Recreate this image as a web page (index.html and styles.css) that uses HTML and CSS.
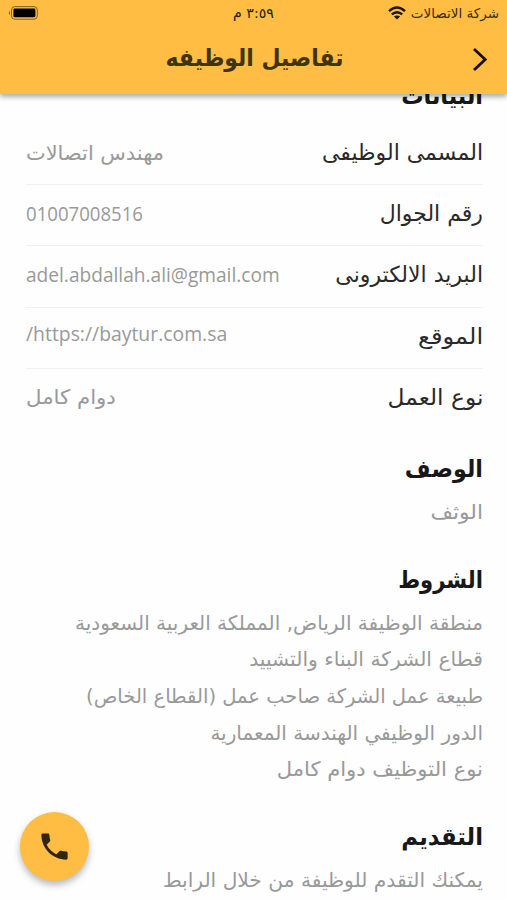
FILE: index.html
```html
<!DOCTYPE html>
<html lang="ar" dir="rtl">
<head>
<meta charset="utf-8">
<title>تفاصيل الوظيفه</title>
<link rel="stylesheet" href="styles.css">
</head>
<body>
<div class="screen">
  <header class="top">
    <div class="status">
      <div class="carrier"><span class="carrier-name">شركة الاتصالات</span>
        <svg class="wifi" width="18" height="14" viewBox="0 0 18 14"><path d="M1 5.2Q9-2 17 5.2M3.8 8.4Q9 4 14.2 8.4" fill="none" stroke="#1b1405" stroke-width="2.4"/><path d="M5.9 10.6Q9 8.2 12.1 10.6L9 13.6Z" fill="#1b1405"/></svg>
      </div>
      <span class="time">٣:٥٩ م</span>
      <svg class="battery" width="30" height="14" viewBox="0 0 30 14"><rect x="3.5" y=".6" width="25.8" height="12.6" rx="3.3" fill="none" stroke="#806022"/><rect x="5.4" y="2.5" width="22" height="8.8" rx="1.4" fill="#000"/><path d="M2 4.8Q-.2 7 2 9.2Z" fill="#806022"/></svg>
    </div>
    <div class="bar">
      <svg class="back" width="16" height="25" viewBox="0 0 16 25"><path d="M2 2 13.2 12.5 2 23" fill="none" stroke="#171205" stroke-width="2.8"/></svg>
      <h1>تفاصيل الوظيفه</h1>
    </div>
  </header>
  <main>
    <h2 class="first">البيانات</h2>
    <dl>
      <div class="row"><dt>المسمى الوظيفى</dt><dd class="v1">مهندس اتصالات</dd></div>
      <div class="row"><dt>رقم الجوال</dt><dd class="latin v2">01007008516</dd></div>
      <div class="row"><dt>البريد الالكترونى</dt><dd class="latin v3">adel.abdallah.ali@gmail.com</dd></div>
      <div class="row"><dt class="l4">الموقع</dt><dd class="latin v4">https://baytur.com.sa/</dd></div>
      <div class="row"><dt class="l5">نوع العمل</dt><dd class="v5">دوام كامل</dd></div>
    </dl>
    <section class="desc"><h2>الوصف</h2><p>الوثف</p></section>
    <section class="terms"><h2>الشروط</h2>
      <p class="p1">منطقة الوظيفة الرياض, المملكة العربية السعودية</p>
      <p class="p2">قطاع الشركة البناء والتشييد</p>
      <p class="p3">طبيعة عمل الشركة صاحب عمل (القطاع الخاص)</p>
      <p class="p4">الدور الوظيفي الهندسة المعمارية</p>
      <p class="p5">نوع التوظيف دوام كامل</p>
    </section>
    <section class="apply"><h2>التقديم</h2><p>يمكنك التقدم للوظيفة من خلال الرابط</p></section>
  </main>
  <button class="call" aria-label="اتصال"><svg width="35" height="35" viewBox="0 0 24 24"><path fill="#30270d" d="M6.62 10.79c1.44 2.83 3.76 5.14 6.59 6.59l2.2-2.2c.27-.27.67-.36 1.02-.24 1.12.37 2.33.57 3.57.57.55 0 1 .45 1 1V20c0 .55-.45 1-1 1-9.39 0-17-7.61-17-17 0-.55.45-1 1-1h3.5c.55 0 1 .45 1 1 0 1.25.2 2.45.57 3.57.11.35.03.74-.25 1.02l-2.2 2.2z"/></svg></button>
</div>
</body>
</html>
```
FILE: styles.css
```css
* { box-sizing: border-box; }
body { margin: 0; background: #fefefe; color: #222; font-family: "DejaVu Sans", sans-serif; }
.screen { position: relative; height: 900px; overflow: hidden; }
.top { position: relative; z-index: 1; height: 94px; background: #ffbd43; box-shadow: 0 3px 5px rgba(0,0,0,.32); }
.status { display: grid; grid-template-columns: 1fr auto 1fr; align-items: center; height: 26px; padding: 0 8px; }
.carrier { display: flex; align-items: center; gap: 5px; font-size: 13.5px; color: #3a2c10; white-space: nowrap; }
.time { font-size: 14.2px; color: #251c08; white-space: nowrap; }
.battery { justify-self: end; }
.bar { display: flex; align-items: center; height: 67px; padding: 0 19px; }
h1 { margin: -4px 128px 0 0; font-size: 24px; line-height: 40px; color: #403410; white-space: nowrap; transform: scaleX(.915); transform-origin: right; }
main { padding: 0 24px 0 26px; }
h2 { margin: 0; font-size: 24px; line-height: 40px; color: #181818; white-space: nowrap; transform: scaleX(.93); transform-origin: right; }
.first { height: 30px; margin-top: -18px; }
dl { margin: 18px 0 0; }
.row { display: flex; justify-content: space-between; align-items: center; height: 61.2px; border-bottom: 1px solid #f1f1f1; white-space: nowrap; }
.row:last-child { border: 0; }
dt { margin-top: -3px; font-size: 22px; color: #292929; transform-origin: right; }
.l4 { transform: scaleX(1.1); }
.l5 { transform: scaleX(1.06); }
dd { margin: -2px 0 0; font-size: 20px; color: #999; transform-origin: left; }
.v1 { transform: scaleX(1.045); }
.v5 { margin-top: -4px; transform: scaleX(1.065); }
.latin { margin-top: -4px; font-family: "Open Sans", sans-serif; font-size: 19.5px; }
.v2 { font-size: 20px; transform: scaleX(.93); }
.v3 { transform: scaleX(.98); }
.v4 { margin-top: -9px; transform: scaleX(.993); }
p { margin: 0; font-size: 20px; line-height: 36.7px; color: #999; white-space: nowrap; transform-origin: right; }
.desc { padding-top: 19px; }
.desc p { margin-top: 5px; transform: scaleX(1.09); }
.terms { padding-top: 29px; }
.terms h2 { margin-bottom: 5px; transform: scaleX(.88); }
.p2 { transform: scaleX(1.013); }
.p3 { transform: scaleX(.977); }
.p5 { transform: scaleX(1.055); }
.apply { padding-top: 29px; }
.apply h2 { margin-bottom: 5px; transform: scaleX(.95); }
.apply p { transform: scaleX(1.01); }
.call { position: absolute; left: 20px; top: 812px; width: 69px; height: 69px; padding: 0; border: 0; border-radius: 50%; background: #ffbd43; display: grid; place-items: center; box-shadow: 0 4px 7px rgba(0,0,0,.28); }
```
